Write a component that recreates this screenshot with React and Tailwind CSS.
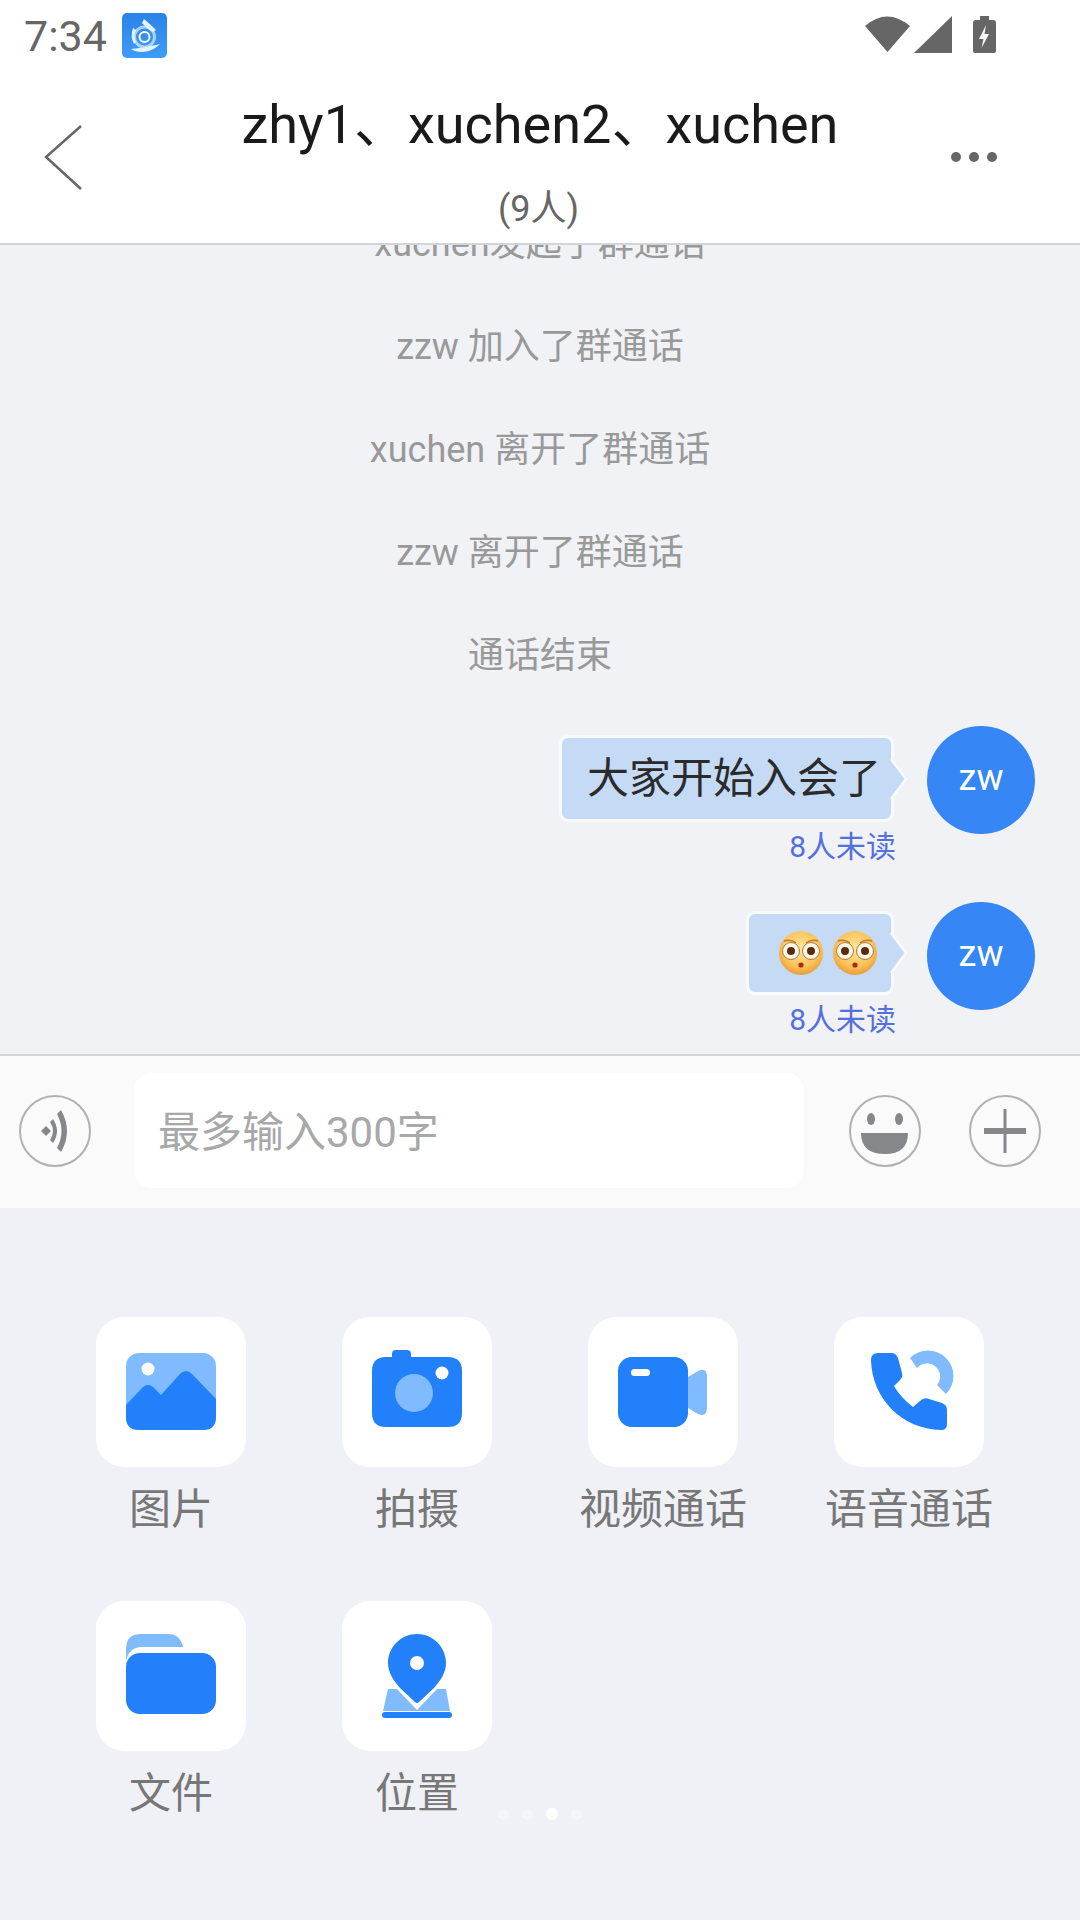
import React from 'react';

const FONT = "font-['Roboto','Noto_Sans_CJK_SC',sans-serif]";

function AppIcon() {
  return (
    <svg width="45" height="45" viewBox="0 0 45 45">
      <defs>
        <linearGradient id="appBg" x1="0" y1="0" x2="0" y2="1">
          <stop offset="0" stopColor="#2a83e8" />
          <stop offset="1" stopColor="#3f9bf8" />
        </linearGradient>
      </defs>
      <rect width="45" height="45" rx="5" fill="url(#appBg)" />
      <circle cx="22.5" cy="24" r="5" fill="none" stroke="#fff" strokeWidth="2" />
      <circle cx="22.5" cy="24" r="10" fill="none" stroke="#a9d4f8" strokeWidth="3" />
      <path d="M22 6 Q28 11 34 17 L31 19 Q24 15 20 10 Z" fill="#e4f2fd" />
      <path d="M9 36 Q22 35 38 31 Q30 39 20 39 Q13 39 9 36 Z" fill="#e4f2fd" />
      <path d="M11 15 Q8 24 12 31 L14 29 Q11 23 14 17 Z" fill="#e4f2fd" />
    </svg>
  );
}

function StatusIcons() {
  return (
    <svg width="131" height="39" viewBox="0 0 131 39" fill="#666">
      <path d="M0 11 Q22 -8 45 11 L22.5 37 Z" />
      <path d="M87 1 V38 H49 Z" />
      <path fillRule="evenodd" d="M115 5 V1 H124 V5 H128 Q131 5 131 8 V36 Q131 38 129 38 H110 Q108 38 108 36 V8 Q108 5 111 5 Z M121 10 L114 24 H118.5 L116.5 33 L124 19 H119.5 Z" />
    </svg>
  );
}

function Bubble({ className, children }) {
  return (
    <div className={`relative flex items-center justify-end rounded-[9px] border-[3px] border-[#f8fafe] bg-[#c5daf4] ${className}`}>
      {children}
      <svg className="absolute right-[-17px] top-1/2 -translate-y-1/2" width="18" height="44" viewBox="0 0 18 44">
        <path d="M1 2 L16 22 L1 42" fill="#c5daf4" stroke="#f8fafe" strokeWidth="2.5" />
      </svg>
    </div>
  );
}

function Avatar() {
  return (
    <div className="flex h-[108px] w-[108px] shrink-0 items-center justify-center rounded-full bg-[#3686f5] pb-[4px] text-[36px] text-white">
      zw
    </div>
  );
}

function Emoji() {
  return (
    <svg width="44" height="44" viewBox="0 0 44 44">
      <defs>
        <radialGradient id="face" cx="0.5" cy="0.4" r="0.62">
          <stop offset="0" stopColor="#ffe7a0" />
          <stop offset="0.65" stopColor="#fdc45c" />
          <stop offset="1" stopColor="#e69a35" />
        </radialGradient>
      </defs>
      <circle cx="22" cy="22" r="22" fill="url(#face)" />
      <circle cx="12" cy="20" r="8.5" fill="#fff8e6" stroke="#a9783a" strokeWidth="1" />
      <circle cx="32" cy="20" r="8.5" fill="#fff8e6" stroke="#a9783a" strokeWidth="1" />
      <circle cx="12" cy="20" r="4" fill="#5a2a10" />
      <circle cx="32" cy="20" r="4" fill="#5a2a10" />
      <path d="M5 10 Q12 8 17 12 M27 12 Q32 8 39 10" fill="none" stroke="#b97a2c" strokeWidth="1.5" />
      <circle cx="22" cy="34" r="2.6" fill="#a92b10" />
    </svg>
  );
}

function RoundIcon({ children }) {
  return (
    <div className="h-[72px] w-[72px] shrink-0 rounded-full border-2 border-[#b0b0b0]">
      <svg className="-m-[2px]" width="72" height="72" viewBox="0 0 72 72" fill="#85878b">{children}</svg>
    </div>
  );
}

const TOOLS = [
  {
    label: '图片',
    icon: (
      <>
        <rect x="30" y="36" width="90" height="77" rx="13" fill="#80bbff" />
        <circle cx="52" cy="52" r="6.5" fill="#fff" />
        <path d="M30 88 L47 70 Q52 66 57 70 L65 78 L84 57 Q90 51 96 57 L120 82 V100 Q120 113 107 113 H43 Q30 113 30 100 Z" fill="#2280fa" />
      </>
    ),
  },
  {
    label: '拍摄',
    icon: (
      <>
        <path d="M50 40 V37 Q50 33 54 33 H65 Q69 33 69 37 V40 H106 Q120 40 120 54 V96 Q120 110 106 110 H44 Q30 110 30 96 V54 Q30 40 44 40 Z" fill="#2280fa" />
        <circle cx="72" cy="76" r="19" fill="#80bbff" />
        <circle cx="100" cy="56" r="6.5" fill="#fff" />
      </>
    ),
  },
  {
    label: '视频通话',
    icon: (
      <>
        <path d="M100 60 L110 54 Q119 50 119 60 V90 Q119 101 110 97 L100 91 Z" fill="#80bbff" />
        <rect x="30" y="40" width="70" height="70" rx="14" fill="#2280fa" />
        <rect x="43" y="52" width="19" height="7" rx="3.5" fill="#fff" />
      </>
    ),
  },
  {
    label: '语音通话',
    icon: (
      <>
        <path d="M37 43 Q37 36 44 36 H57 Q62 36 64 41 L68 56 Q69 60 66 63 L60 69 Q67 81 79 90 L86 84 Q90 80 95 82 L108 86 Q113 88 113 93 V107 Q113 113 107 113 C68 112 38 82 37 43 Z" fill="#2280fa" />
        <path d="M76 41 A25 25 0 0 1 112 77 L103 68 A13 13 0 0 0 83 51 Z" fill="#80bbff" />
      </>
    ),
  },
  {
    label: '文件',
    icon: (
      <>
        <path d="M30 60 V48 Q30 33 45 33 H72 Q84 33 87 46 H46 Q33 46 30 60 Z" fill="#80bbff" />
        <rect x="30" y="52" width="90" height="61" rx="14" fill="#2280fa" />
      </>
    ),
  },
  {
    label: '位置',
    icon: (
      <>
        <path d="M46 88 H55 L75 109 L95 88 H104 L108 110 H41 Z" fill="#80bbff" />
        <rect x="40" y="111" width="70" height="6" rx="3" fill="#2280fa" />
        <path d="M75 33 C91 33 104 46 104 62 C104 72 98 80 92 87 L77 101 Q75 103 73 101 L58 87 C52 80 46 72 46 62 C46 46 59 33 75 33 Z" fill="#2280fa" />
        <circle cx="75" cy="62" r="7" fill="#fff" />
      </>
    ),
  },
];

const NOTICES = ['xuchen发起了群通话', 'zzw 加入了群通话', 'xuchen 离开了群通话', 'zzw 离开了群通话', '通话结束'];

export default function App() {
  return (
    <div className={`flex h-[1920px] w-[1080px] flex-col overflow-hidden bg-[#f0f1f6] ${FONT}`}>
      {/* status bar */}
      <div className="flex h-[70px] items-start bg-white">
        <span className="ml-[24px] mt-[13px] text-[43px] leading-[46px] text-[#666]">7:34</span>
        <div className="ml-[15px] mt-[13px]"><AppIcon /></div>
        <div className="ml-auto mr-[84px] mt-[15px]"><StatusIcons /></div>
      </div>

      {/* header */}
      <header className="relative flex h-[175px] flex-col items-center border-b-2 border-[#d2d5d9] bg-white">
        <h1 className="mt-[25px] text-[54px] leading-[60px] text-[#1a1a1a]">zhy1、xuchen2、xuchen</h1>
        <p className="mt-[34px] pr-[3px] text-[36px] leading-[40px] text-[#666]">(9人)</p>
        <svg className="absolute left-[44px] top-[55px]" width="40" height="66" viewBox="0 0 40 66">
          <path d="M37 1 L2 32 L37 64" fill="none" stroke="#666" strokeWidth="2.5" />
        </svg>
        <svg className="absolute right-[82px] top-[80px]" width="48" height="14" viewBox="0 0 48 14" fill="#666">
          <circle cx="6" cy="7" r="5" />
          <circle cx="24" cy="7" r="5" />
          <circle cx="42" cy="7" r="5" />
        </svg>
      </header>

      {/* chat */}
      <main className="h-[809px] overflow-hidden bg-[#f0f2f6]">
        <div className="-mt-[53px]">
          {NOTICES.map((text) => (
            <div key={text} className="flex h-[103px] items-center justify-center text-[36px] text-[#999]">{text}</div>
          ))}
        </div>

        <div className="mt-[19px] flex justify-end gap-[33px] pr-[45px]">
          <div className="flex flex-col items-end">
            <Bubble className="mt-[9px] h-[87px] w-[335px] pr-[10px] text-[42px] text-[#2b2b2b]">大家开始入会了</Bubble>
            <span className="-mr-[2px] mt-[7px] text-[30px] leading-[36px] text-[#5470dc]">8人未读</span>
          </div>
          <Avatar />
        </div>

        <div className="mt-[37px] flex justify-end gap-[33px] pr-[45px]">
          <div className="flex flex-col items-end">
            <Bubble className="mt-[9px] h-[84px] w-[148px] gap-[10px] pr-[14px]">
              <Emoji />
              <Emoji />
            </Bubble>
            <span className="-mr-[2px] mt-[7px] text-[30px] leading-[36px] text-[#5470dc]">8人未读</span>
          </div>
          <Avatar />
        </div>
      </main>

      {/* input bar */}
      <div className="flex h-[154px] items-center border-t-2 border-[#d2d5d9] bg-[#fafafa] pb-[3px]">
        <div className="ml-[19px]">
          <RoundIcon>
            <path d="M27 31 L32 36 L27 41 L22 36 Z" />
            <path d="M34 24 Q42 36 34 48 L31 45 Q37 36 31 27 Z" />
            <path d="M42 15 Q54 36 42 57 L38 53 Q47 36 38 19 Z" />
          </RoundIcon>
        </div>
        <div className="ml-[43px] flex h-[115px] w-[670px] items-center rounded-[18px] bg-white pl-[24px] pt-[4px] text-[42px] text-[#a8a8a8]">
          最多输入300字
        </div>
        <div className="ml-[45px]">
          <RoundIcon>
            <ellipse cx="22" cy="24" rx="4" ry="6" />
            <ellipse cx="50" cy="24" rx="4" ry="6" />
            <path d="M12 38 H59 Q59 59 36 59 Q12 59 12 38 Z" />
          </RoundIcon>
        </div>
        <div className="ml-[48px]">
          <RoundIcon>
            <rect x="15" y="33" width="42" height="6" />
            <rect x="34.5" y="14" width="3" height="44" />
          </RoundIcon>
        </div>
      </div>

      {/* tools panel */}
      <div className="relative flex-1 pl-[48px] pt-[109px]">
        <div className="grid auto-rows-[284px] grid-cols-[repeat(4,246px)]">
          {TOOLS.map((tool) => (
            <div key={tool.label} className="flex flex-col items-center">
              <div className="h-[150px] w-[150px] rounded-[28px] bg-white">
                <svg width="150" height="150" viewBox="0 0 150 150">{tool.icon}</svg>
              </div>
              <span className="mt-[15px] text-[42px] leading-[56px] text-[#777]">{tool.label}</span>
            </div>
          ))}
        </div>
        <div className="absolute left-[498px] top-[600px] flex h-[12px] items-center gap-[13px]">
          <span className="h-[11px] w-[11px] rounded-full bg-[#f5f6f9]" />
          <span className="h-[11px] w-[11px] rounded-full bg-[#f5f6f9]" />
          <span className="h-[12px] w-[12px] rounded-full bg-white" />
          <span className="h-[11px] w-[11px] rounded-full bg-[#f5f6f9]" />
        </div>
      </div>
    </div>
  );
}
